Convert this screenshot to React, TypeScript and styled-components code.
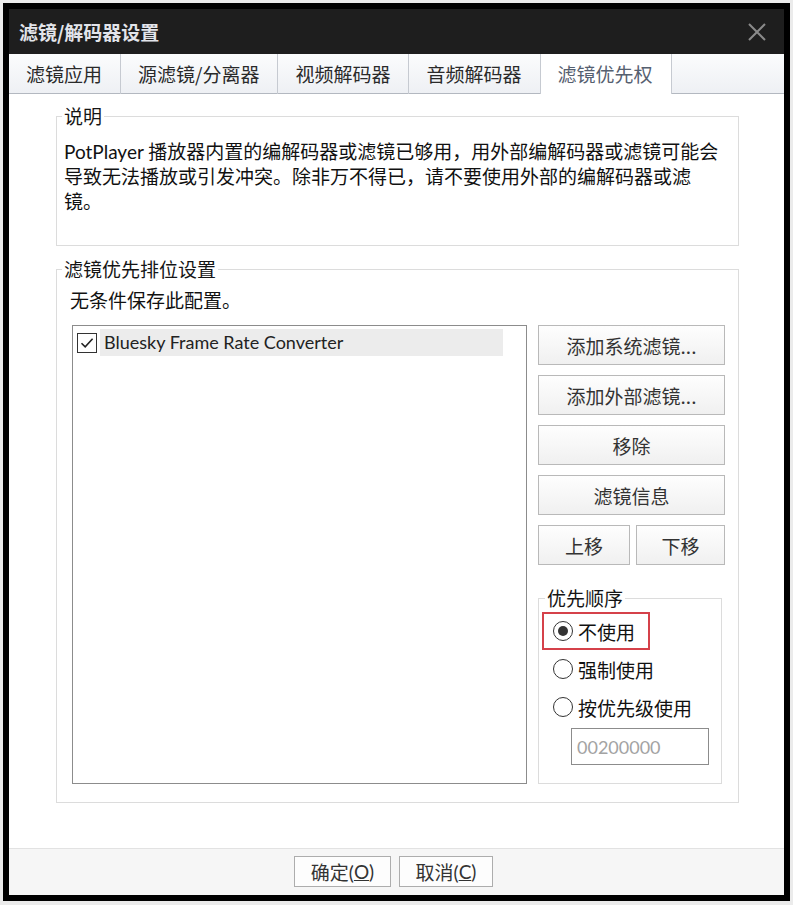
import React from "react";
import styled, { createGlobalStyle } from "styled-components";

const FONT = `"Noto Sans CJK SC", "Noto Sans", sans-serif`;
const MIXED = `Lato, "Noto Sans CJK SC", sans-serif`;

const Global = createGlobalStyle`
  html, body {
    margin: 0;
    padding: 0;
    background: #ebebeb;
  }
  body {
    font-family: ${FONT};
    color: #1a1a1a;
  }
  * { box-sizing: border-box; }
`;

const Page = styled.div`
  padding: 3px 0 0 3px;
`;

const Window = styled.div`
  width: 787px;
  height: 898px;
  border: 6px solid #000;
  display: flex;
  flex-direction: column;
  background: #fff;
`;

const TitleBar = styled.div`
  height: 45px;
  flex: none;
  background: #1e1e1e;
  display: flex;
  align-items: center;
  justify-content: space-between;
  padding: 0 18px 0 10px;
  color: #e2e4ea;
  font-size: 19px;
  font-weight: 700;
`;

const CloseIcon = styled.svg`
  width: 18px;
  height: 18px;
  display: block;
`;

const TabBar = styled.div`
  height: 40px;
  flex: none;
  display: flex;
  background: linear-gradient(#fbfcfd, #eef0f4);
  border-bottom: 1px solid #b3b8c0;
`;

const Tab = styled.div<{ $active?: boolean }>`
  height: 40px;
  margin-bottom: -1px;
  padding: 0 18px 1px 17px;
  display: flex;
  align-items: center;
  border-right: 1px solid #c6cad1;
  font-size: 19px;
  color: ${(p) => (p.$active ? "#566070" : "#2a2a2a")};
  background: ${(p) => (p.$active ? "#fff" : "transparent")};
  white-space: nowrap;
`;

const Body = styled.div`
  flex: 1;
  padding: 12px 45px 0 47px;
  background: #fff;
`;

const Group = styled.fieldset<{ $mt?: number; $w?: number }>`
  margin: ${(p) => p.$mt ?? 0}px 0 0 0;
  padding: 0;
  border: 1px solid #dcdcdc;
  min-width: 0;
  ${(p) => (p.$w ? `width: ${p.$w}px;` : "")}
`;

const Legend = styled.legend<{ $ml: number }>`
  margin-left: ${(p) => p.$ml}px;
  padding: 0 2px;
  font-size: 19px;
  line-height: 20px;
  color: #151515;
`;

const Description = styled.div`
  padding: 13px 8px 31px 7px;
  font-family: ${MIXED};
  font-size: 19px;
  line-height: 25px;
  color: #111;
  white-space: nowrap;
`;

const GroupInner = styled.div`
  padding: 8px 13px 18px 7px;
`;

const Note = styled.div`
  margin-left: 6px;
  font-size: 19px;
  line-height: 25px;
  color: #111;
`;

const FilterRow = styled.div`
  display: flex;
  gap: 11px;
  margin: 13px 0 0 8px;
`;

const ListBox = styled.div`
  flex: 1;
  border: 1px solid #8c8c8c;
  padding: 3px 4px;
`;

const ListItem = styled.div`
  display: flex;
  align-items: center;
  height: 27px;
`;

const CheckBox = styled.span`
  width: 20px;
  height: 20px;
  flex: none;
  border: 1.5px solid #333;
  margin-right: 3px;
  display: flex;
  align-items: center;
  justify-content: center;
`;

const ItemLabel = styled.span`
  width: 403px;
  height: 27px;
  padding-left: 4px;
  background: #ececec;
  font-family: ${MIXED};
  font-size: 18px;
  line-height: 27px;
  color: #222;
`;

const SideColumn = styled.div`
  width: 187px;
  flex: none;
  display: flex;
  flex-direction: column;
  gap: 10px;
`;

const Button = styled.div<{ $w?: number }>`
  height: 40px;
  ${(p) => (p.$w ? `width: ${p.$w}px;` : "")}
  border: 1px solid #b9b9b9;
  background: linear-gradient(#fefefe, #f0f0f0);
  display: flex;
  align-items: center;
  justify-content: center;
  font-size: 19px;
  color: #333;
`;

const ButtonPair = styled.div`
  display: flex;
  gap: 6px;
`;

const PriorityBody = styled.div`
  padding: 4px 0 18px 3px;
`;

const RadioRow = styled.div<{ $mark?: boolean }>`
  height: 38px;
  width: ${(p) => (p.$mark ? "108px" : "auto")};
  border: 2px solid ${(p) => (p.$mark ? "#d5414a" : "transparent")};
  padding-left: 9px;
  display: flex;
  align-items: center;
  gap: 5px;
  font-size: 19px;
  color: #111;
`;

const Radio = styled.span<{ $checked?: boolean }>`
  width: 20px;
  height: 20px;
  flex: none;
  border-radius: 50%;
  border: 1.5px solid #333;
  display: flex;
  align-items: center;
  justify-content: center;
  &::after {
    content: "";
    width: 10px;
    height: 10px;
    border-radius: 50%;
    background: ${(p) => (p.$checked ? "#333" : "transparent")};
  }
`;

const NumberField = styled.input`
  display: block;
  margin: 2px 0 0 29px;
  width: 138px;
  height: 37px;
  border: 1px solid #8c8c8c;
  padding: 0 0 0 5px;
  font-family: ${MIXED};
  font-size: 18px;
  color: #a3a3a3;
  background: #fff;
  outline: none;
`;

const Footer = styled.div`
  height: 47px;
  flex: none;
  border-top: 1px solid #e2e2e2;
  background: #f6f6f6;
  display: flex;
  justify-content: center;
  gap: 8px;
  padding: 7px 6px 0 0;
`;

const FooterButton = styled.div<{ $w: number }>`
  width: ${(p) => p.$w}px;
  height: 31px;
  border: 1px solid #adadad;
  background: #fdfdfd;
  display: flex;
  align-items: center;
  justify-content: center;
  font-family: ${MIXED};
  font-size: 19px;
  color: #333;
`;

const Accel = styled.span`
  text-decoration: underline;
`;

const tabs = ["滤镜应用", "源滤镜/分离器", "视频解码器", "音频解码器", "滤镜优先权"];

export default function App() {
  return (
    <>
      <Global />
      <Page>
        <Window>
          <TitleBar>
            <span>滤镜/解码器设置</span>
            <CloseIcon viewBox="0 0 18 18">
              <path d="M1 1 L17 17 M17 1 L1 17" stroke="#8a8a8a" strokeWidth="2" />
            </CloseIcon>
          </TitleBar>
          <TabBar>
            {tabs.map((t, i) => (
              <Tab key={t} $active={i === 4}>
                {t}
              </Tab>
            ))}
          </TabBar>
          <Body>
            <Group>
              <Legend $ml={5}>说明</Legend>
              <Description>
                PotPlayer 播放器内置的编解码器或滤镜已够用，用外部编解码器或滤镜可能会
                <br />
                导致无法播放或引发冲突。除非万不得已，请不要使用外部的编解码器或滤
                <br />
                镜。
              </Description>
            </Group>
            <Group $mt={13}>
              <Legend $ml={5}>滤镜优先排位设置</Legend>
              <GroupInner>
                <Note>无条件保存此配置。</Note>
                <FilterRow>
                  <ListBox>
                    <ListItem>
                      <CheckBox>
                        <svg width="14" height="12" viewBox="0 0 14 12">
                          <path d="M1.5 6.2 L5.2 9.8 L12.6 1.8" fill="none" stroke="#222" strokeWidth="1.6" />
                        </svg>
                      </CheckBox>
                      <ItemLabel>Bluesky Frame Rate Converter</ItemLabel>
                    </ListItem>
                  </ListBox>
                  <SideColumn>
                    <Button>添加系统滤镜...</Button>
                    <Button>添加外部滤镜...</Button>
                    <Button>移除</Button>
                    <Button>滤镜信息</Button>
                    <ButtonPair>
                      <Button $w={92}>上移</Button>
                      <Button $w={89}>下移</Button>
                    </ButtonPair>
                    <Group $mt={13} $w={184}>
                      <Legend $ml={6}>优先顺序</Legend>
                      <PriorityBody>
                        <RadioRow $mark>
                          <Radio $checked />
                          不使用
                        </RadioRow>
                        <RadioRow>
                          <Radio />
                          强制使用
                        </RadioRow>
                        <RadioRow>
                          <Radio />
                          按优先级使用
                        </RadioRow>
                        <NumberField readOnly value="00200000" />
                      </PriorityBody>
                    </Group>
                  </SideColumn>
                </FilterRow>
              </GroupInner>
            </Group>
          </Body>
          <Footer>
            <FooterButton $w={97}>
              确定(<Accel>O</Accel>)
            </FooterButton>
            <FooterButton $w={94}>
              取消(<Accel>C</Accel>)
            </FooterButton>
          </Footer>
        </Window>
      </Page>
    </>
  );
}
